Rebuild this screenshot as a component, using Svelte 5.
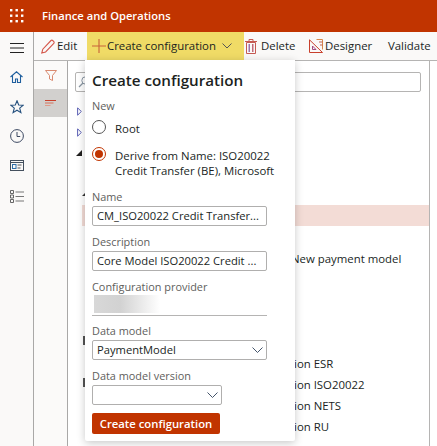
<script>
  const rows = [
    { mark: 'open', text: '' },
    { mark: 'open', text: '' },
    { mark: 'solid', text: '' },
    { mark: '', text: '' },
    { mark: 'small', text: '' },
    { mark: '', text: '', selected: true },
    { mark: '', text: '' },
    { mark: '', text: 'New payment model', early: true },
    { mark: '', text: '' },
    { mark: '', text: '' },
    { mark: '', text: '' },
    { mark: 'tick', text: '' },
    { mark: '', text: 'ion ESR' },
    { mark: 'tick', text: 'ion ISO20022' },
    { mark: '', text: 'ion NETS' },
    { mark: '', text: 'ion RU' }
  ];
  const dots = [0, 1, 2];
</script>

<div class="page">
  <header class="top">
    <svg class="waffle" width="14" height="14" viewBox="0 0 14 14">
      {#each dots as r}
        {#each dots as c}
          <rect x={c * 5.5} y={r * 5.5} width="2.4" height="2.4" fill="#fff" />
        {/each}
      {/each}
    </svg>
    <span class="brand">Finance and Operations</span>
  </header>

  <div class="body">
    <nav class="rail">
      <svg class="ico burger" width="14" height="10" viewBox="0 0 14 10"><path d="M0 .5h14M0 5h14M0 9.500h14" stroke="#222" stroke-width="1" fill="none" /></svg>
      <svg class="ico home" width="13" height="12" viewBox="0 0 13 12"><path d="M.5 6 6.500 .8 12.500 6M2.500 4.500V11.500h3v-3.500h2v3.500h3V4.500" stroke="#1f5f9e" stroke-width="1.100" fill="none" /></svg>
      <svg class="ico star" width="14" height="14" viewBox="0 0 14 14"><path d="M7 .8l1.700 4.200 4.500.3-3.500 2.800 1.200 4.500L7 10.200l-3.900 2.400 1.200-4.500L.8 5.300l4.500-.3z" stroke="#24507e" stroke-width="1.100" fill="none" /></svg>
      <svg class="ico clock" width="14" height="14" viewBox="0 0 14 14"><circle cx="7" cy="7" r="6.400" stroke="#3d4a63" stroke-width="1" fill="none" /><path d="M7 3v4.500h3.200" stroke="#3d4a63" stroke-width="1" fill="none" /></svg>
      <svg class="ico card" width="14" height="11" viewBox="0 0 14 11"><rect x=".5" y=".5" width="13" height="10" stroke="#44505e" fill="none" /><path d="M1 2.500h12" stroke="#44505e" /><rect x="2.500" y="4.500" width="3.500" height="4" stroke="#2f6fa8" fill="none" /><path d="M7.500 5h4M7.500 8h3" stroke="#555" /></svg>
      <svg class="ico list" width="14" height="13" viewBox="0 0 14 13"><path d="M.5.500h3v3h-3zM.5 5h3v3h-3zM.5 9.500h3v3h-3z" stroke="#555" stroke-width=".9" fill="none" /><path d="M5.500 2h8.500M5.500 6.500h8.500M5.500 11h8.500" stroke="#777" /></svg>
    </nav>

    <main class="main">
      <div class="commands">
        <button class="cmd edit">
          <svg width="14" height="15" viewBox="0 0 14 15"><path d="M.8 14l1-3.800L10 1.500a1.200 1.200 0 0 1 1.700 0l1.100 1.100a1.200 1.200 0 0 1 0 1.700L4.600 13z" stroke="#d4574a" stroke-width="1.100" fill="none" /></svg>
          Edit
        </button>
        <button class="cmd create">
          <svg width="14" height="14" viewBox="0 0 14 14"><path d="M7 0v14M0 7h14" stroke="#c8623a" stroke-width="1.100" /></svg>
          <span>Create configuration</span>
          <svg class="chev" width="10" height="6" viewBox="0 0 10 6"><path d="M.5.500l4.500 4.500 4.500-4.500" stroke="#555" fill="none" /></svg>
        </button>
        <button class="cmd delete">
          <svg width="12" height="15" viewBox="0 0 12 15"><path d="M1.500 3.500h9v11h-9zM0 2.500h12M4 2V.5h4V2" stroke="#c65a52" fill="none" /><rect x="3.500" y="5" width="1.500" height="8" fill="#9a72b0" /><rect x="7" y="5" width="1.500" height="8" fill="#c06a7a" /></svg>
          Delete
        </button>
        <button class="cmd designer">
          <svg width="14" height="14" viewBox="0 0 14 14"><path d="M.5 .8 13.500 13.500H.5z" stroke="#c8402c" fill="none" /><path d="M7.500 .5h6v10" stroke="#d8884a" fill="none" /><path d="M3.500 10.500h3.500l-3.500-3.500z" stroke="#a04a80" fill="none" /><path d="M10 3h3.500M11 6h2.500" stroke="#c06050" /></svg>
          Designer
        </button>
        <button class="cmd validate">Validate</button>
      </div>

      <div class="work">
        <aside class="side">
          <div class="side-btn">
            <svg width="12" height="11" viewBox="0 0 12 11"><path d="M.5.500h11L7.500 5.500v5l-3-1.500V5.500z" stroke="#d98a70" fill="none" /></svg>
          </div>
          <div class="side-btn on">
            <svg width="11" height="6" viewBox="0 0 11 6"><path d="M0 .5h11" stroke="#c8402c" /><path d="M0 3h8.500" stroke="#d8705a" /><path d="M0 5.500h5.500" stroke="#e09a8a" /></svg>
          </div>
        </aside>

        <section class="content">
          <div class="search">
            <svg width="12" height="12" viewBox="0 0 12 12"><circle cx="7.500" cy="4.500" r="3.700" stroke="#8a96a3" fill="none" /><path d="M5 7 1 11" stroke="#8a96a3" stroke-width="1.200" /></svg>
          </div>
          <div class="tree">
            {#each rows as row}
              <div class="row" class:selected={row.selected} class:early={row.early}>
                {#if row.mark === 'open'}
                  <svg class="mark open" width="5" height="9" viewBox="0 0 5 9"><path d="M.6.800 4.300 4.500.6 8.200z" stroke="#5b5fb5" fill="none" /></svg>
                {:else if row.mark}
                  <i class="mark {row.mark}"></i>
                {/if}
                <span>{row.text}</span>
              </div>
            {/each}
          </div>
        </section>
      </div>
    </main>
  </div>

  <div class="panel">
    <h2>Create configuration</h2>
    <div class="label first">New</div>
    <label class="radio one"><i class="dot"></i><span>Root</span></label>
    <label class="radio two"><i class="dot checked"></i><span>Derive from Name: ISO20022 Credit Transfer (BE), Microsoft</span></label>

    <div class="label name">Name</div>
    <div class="input">CM_ISO20022 Credit Transfer...</div>
    <div class="label">Description</div>
    <div class="input">Core Model ISO20022 Credit ...</div>
    <div class="label provider-label">Configuration provider</div>
    <div class="provider"></div>
    <div class="rule"></div>
    <div class="label dm">Data model</div>
    <div class="input select">PaymentModel<svg width="11" height="6" viewBox="0 0 11 6"><path d="M.5.500l5 5 5-5" stroke="#44546a" fill="none" /></svg></div>
    <div class="label">Data model version</div>
    <div class="input select short"><svg width="11" height="6" viewBox="0 0 11 6"><path d="M.5.500l5 5 5-5" stroke="#44546a" fill="none" /></svg></div>
    <button class="primary">Create configuration</button>
  </div>
</div>

<style>
  :global(body) {
    margin: 0;
    background: #fff;
  }
  .page {
    position: relative;
    width: 437px;
    height: 446px;
    overflow: hidden;
    font: 11.400px/16px "Open Sans", "Noto Sans", sans-serif;
    color: #201f1e;
  }
  .top {
    height: 32px;
    background: #c13400;
    display: flex;
    align-items: center;
    padding-left: 10px;
    box-sizing: border-box;
  }
  .brand {
    margin-left: 18px;
    color: #fff;
    font-weight: 600;
    font-size: 11.200px;
  }
  .body {
    display: flex;
    height: 414px;
  }
  .rail {
    width: 33px;
    flex: none;
    background: #faf9f8;
    border-right: 1px solid #a9a8a7;
    display: flex;
    flex-direction: column;
    align-items: center;
  }
  .ico {
    flex: none;
  }
  .burger {
    margin-top: 11px;
  }
  .home {
    margin-top: 18px;
  }
  .star {
    margin-top: 17px;
  }
  .clock {
    margin-top: 15px;
  }
  .card {
    margin-top: 17px;
  }
  .list {
    margin-top: 19px;
  }
  .main {
    flex: 1;
    min-width: 0;
    display: flex;
    flex-direction: column;
  }
  .commands {
    height: 29px;
    box-sizing: border-box;
    background: #faf9f8;
    border-bottom: 1px solid #b5b4b3;
    display: flex;
    align-items: stretch;
  }
  .cmd {
    border: 0;
    background: none;
    padding: 0;
    font: inherit;
    color: #201f1e;
    display: flex;
    align-items: center;
    white-space: nowrap;
    box-sizing: border-box;
  }
  .edit {
    width: 53px;
    padding-left: 7px;
    gap: 2px;
  }
  .create {
    width: 157px;
    background: #f0db66;
    padding-left: 5px;
    gap: 1px;
  }
  .chev {
    margin-left: 5px;
  }
  .delete {
    margin-left: 1px;
    width: 64px;
    gap: 4px;
  }
  .designer {
    width: 79px;
    gap: 2px;
  }
  .work {
    flex: 1;
    display: flex;
    min-height: 0;
  }
  .side {
    width: 33px;
    flex: none;
    background: #fbfaf9;
    border-right: 1px solid #a9a8a7;
  }
  .side-btn {
    height: 28px;
    display: flex;
    align-items: center;
    justify-content: center;
  }
  .side-btn.on {
    background: #d2d0ce;
  }
  .content {
    width: 362px;
    box-sizing: border-box;
    border-right: 1px solid #b5b4b3;
    padding-top: 11px;
  }
  .search {
    margin-left: 7px;
    width: 346px;
    height: 20px;
    box-sizing: border-box;
    border: 1px solid #b5b4b3;
    border-radius: 2px;
    display: flex;
    align-items: center;
    padding-left: 2px;
  }
  .tree {
    margin-top: 8px;
    margin-left: 14px;
  }
  .row {
    position: relative;
    height: 21px;
    line-height: 23px;
    padding-left: 212px;
    white-space: nowrap;
  }
  .row.early {
    padding-left: 209px;
  }
  .row.selected {
    background: #f3dcd6;
  }
  .mark {
    position: absolute;
    display: block;
  }
  .mark.open {
    left: -5px;
    top: 7px;
  }
  .mark.solid {
    left: -6px;
    top: 8px;
    width: 6px;
    height: 6px;
    background: #201f1e;
    clip-path: polygon(100% 0, 100% 100%, 0 100%);
  }
  .mark.small {
    left: 0;
    top: 9px;
    width: 3px;
    height: 3px;
    background: #333;
    clip-path: polygon(100% 0, 100% 100%, 0 100%);
  }
  .mark.tick {
    left: 1px;
    top: 5px;
    width: 1.500px;
    height: 9px;
    background: #555;
  }
  .panel {
    position: absolute;
    left: 85px;
    top: 60px;
    width: 210px;
    height: 381px;
    box-sizing: border-box;
    background: #fff;
    padding: 9px 28px 0 7px;
    box-shadow: 0 2px 8px rgba(0, 0, 0, .22);
    border-radius: 0 0 2px 2px;
  }
  h2 {
    margin: 0;
    font-size: 15.200px;
    line-height: 22px;
    font-weight: 600;
    color: #201f1e;
    white-space: nowrap;
  }
  .label {
    color: #605e5c;
    font-size: 10.900px;
    font-weight: 500;
    line-height: 16px;
    white-space: nowrap;
    margin-top: 8px;
    margin-bottom: 1px;
  }
  .label.first {
    margin-top: 7px;
    margin-bottom: 6px;
  }
  .label.name {
    margin-top: 11px;
  }
  .label.dm {
    margin-top: 7px;
  }
  .label.provider-label {
    margin-bottom: 0;
  }
  .radio {
    display: flex;
    gap: 9px;
    align-items: flex-start;
    line-height: 15px;
  }
  .radio.two {
    margin-top: 11px;
  }
  .radio span {
    margin-top: 1px;
  }
  .radio.two span {
    width: 175px;
    margin-right: -16px;
  }
  .dot {
    flex: none;
    width: 14px;
    height: 14px;
    box-sizing: border-box;
    border: 1px solid #555;
    border-radius: 50%;
    position: relative;
  }
  .dot.checked {
    border-color: #c13400;
  }
  .dot.checked::after {
    content: "";
    position: absolute;
    inset: 2px;
    border-radius: 50%;
    background: #c13400;
  }
  .input {
    height: 20px;
    box-sizing: border-box;
    border: 1px solid #b0afae;
    border-radius: 2px;
    padding: 0 3px 0 4px;
    font-size: 11.200px;
    line-height: 18px;
    white-space: nowrap;
    overflow: hidden;
    display: flex;
    align-items: center;
    justify-content: space-between;
  }
  .short {
    width: 130px;
    justify-content: flex-end;
  }
  .provider {
    height: 18px;
    width: 66px;
    margin-left: 2px;
    background: linear-gradient(90deg, #d8d8d8, #d2d2d2 40%, #fff);
  }
  .rule {
    height: 1px;
    background: #b5b4b3;
    margin-top: 2px;
  }
  .primary {
    display: block;
    margin-top: 8px;
    width: 128px;
    height: 21px;
    padding: 0;
    border: 0;
    border-radius: 2px;
    background: #c13400;
    color: #fff;
    font: 600 11.300px/21px "Open Sans", "Noto Sans", sans-serif;
  }
</style>
